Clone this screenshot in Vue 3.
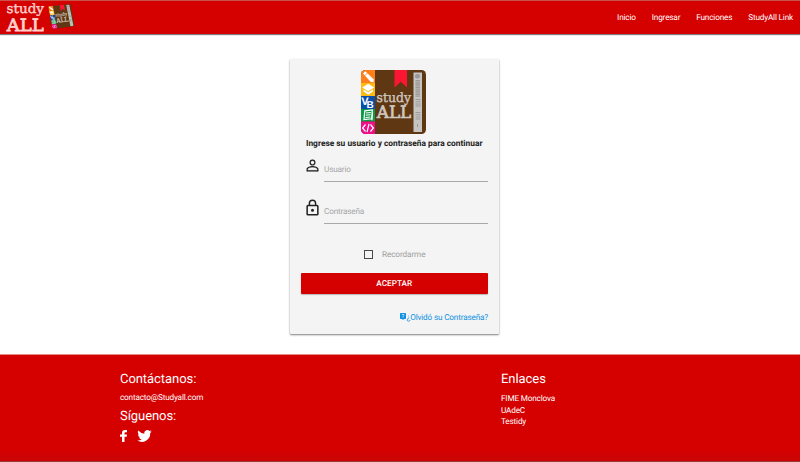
<script setup>
const navLinks = ['Inicio', 'Ingresar', 'Funciones', 'StudyAll Link']
const siteLinks = ['FIME Monclova', 'UAdeC', 'Testidy']
</script>

<template>
  <div class="page">
    <svg class="defs" width="0" height="0" aria-hidden="true">
      <defs>
        <clipPath id="cover"><rect width="65" height="64" rx="4.5" /></clipPath>
        <symbol id="book" viewBox="0 0 65 64">
          <g clip-path="url(#cover)">
            <rect width="65" height="64" fill="#5f3813" />
            <rect width="14" height="13" fill="#ff7f1a" />
            <rect y="13" width="14" height="13" fill="#fdbb12" />
            <rect y="26" width="14" height="13" fill="#0b4ea8" />
            <rect y="39" width="14" height="12.5" fill="#0d9a48" />
            <rect y="51.5" width="14" height="13" fill="#ec1188" />
            <path d="M2 3.500L4.300 1.200 12.500 9.200l.3 3-3-.3z" fill="#fff" />
            <path d="M4 5.500L6.300 3.200" stroke="#ff7f1a" stroke-width=".8" />
            <path d="M7.200 13.800l6 3.700-6 3.700-6-3.700z" fill="#fff" />
            <path d="M2.500 19.500l4.700 2.800 4.800-2.800v2l-4.800 3.200-4.700-3.200z" fill="#fff" />
            <g fill="#fff" font-family="Liberation Sans, sans-serif" font-weight="700">
              <text x=".2" y="34.600" font-size="11">V</text>
              <text x="5.600" y="38.300" font-size="10">B</text>
            </g>
            <path d="M3.800 40.800l7.500-.8-.7 8.800-7.600.8zM11.500 42.500l-.5 7.800" fill="none" stroke="#fff" stroke-width="1.200" />
            <path d="M5 43l4.800-.5M4.800 45.200l4.800-.5M4.500 47.500l4.800-.5" stroke="#fff" stroke-width="1" />
            <path d="M4.500 54.500L1.600 58l2.900 3.500M9.500 54.500l2.900 3.500-2.900 3.500M8 53.800l-2 8.400" fill="none" stroke="#fff" stroke-width="1.200" />
            <path d="M33.500 0H46v17.500l-6.200-5.800-6.300 5.800z" fill="#fb1634" />
            <rect x="52.500" y="2.500" width="8.500" height="59.500" fill="#c6c4c2" />
            <rect x="54" y="4" width="5" height="4.500" rx="2" fill="#999" />
            <path d="M56.700 10v17" stroke="#9b9997" stroke-width="4.500" stroke-dasharray="1 .4" />
            <path d="M57 29v8M57 42v8" stroke="#999" stroke-width="5" stroke-dasharray="1 1.200" />
            <path d="M56.500 54v3" stroke="#999" />
            <g fill="#cfc7c0" stroke="#cfc7c0" font-family="DejaVu Serif, serif">
              <text x="15.500" y="31.500" font-size="13" stroke-width=".35" textLength="34.500" lengthAdjust="spacingAndGlyphs">study</text>
              <text x="15.800" y="48" font-size="17" stroke-width=".7" textLength="34.500" lengthAdjust="spacingAndGlyphs">ALL</text>
            </g>
          </g>
        </symbol>
      </defs>
    </svg>

    <header class="bar">
      <svg class="brand" width="80" height="33" viewBox="0 0 80 33">
        <g fill="#ffd0cc" stroke="#ffd0cc" font-family="DejaVu Serif, serif">
          <text x="6.500" y="11.700" font-size="13" stroke-width=".4" textLength="37.500" lengthAdjust="spacingAndGlyphs">study</text>
          <text x="6.800" y="29.800" font-size="17" stroke-width=".8" textLength="37" lengthAdjust="spacingAndGlyphs">ALL</text>
        </g>
        <g transform="matrix(.345 -.04 .07 .355 48 5.300)">
          <use href="#book" width="65" height="64" />
        </g>
      </svg>
      <nav class="nav">
        <a v-for="link in navLinks" :key="link">{{ link }}</a>
      </nav>
    </header>

    <main class="main">
      <form class="card" @submit.prevent>
        <svg class="logo" width="65" height="64"><use href="#book" width="65" height="64" /></svg>
        <p class="title">Ingrese su usuario y contraseña para continuar</p>
        <div class="field">
          <svg width="13" height="15" viewBox="1 0 22 24" fill="#222" stroke="#222" stroke-width=".2">
            <path d="M12 3.900a3.100 3.100 0 1 1 0 6.200 3.100 3.100 0 0 1 0-6.200M12 15c3.900 0 8 1.700 8 3.200V20H4v-1.800C4 16.700 8.100 15 12 15m0-13a5 5 0 1 0 0 10 5 5 0 0 0 0-10zm0 11c-3.300 0-10 1.700-10 5v4h20v-4c0-3.300-6.700-5-10-5z" fill-rule="evenodd" />
          </svg>
          <span class="input">Usuario</span>
        </div>
        <div class="field">
          <svg width="13" height="17" viewBox="3.500 .5 17 22" fill="#222">
            <path d="M12 17a2 2 0 1 0 0-4 2 2 0 0 0 0 4zm6-9h-1V6A5 5 0 0 0 7 6v2H6a2 2 0 0 0-2 2v10a2 2 0 0 0 2 2h12a2 2 0 0 0 2-2V10a2 2 0 0 0-2-2zM8.900 6a3.100 3.100 0 0 1 6.200 0v2H8.900V6zM18 20H6V10h12v10z" fill-rule="evenodd" />
          </svg>
          <span class="input">Contraseña</span>
        </div>
        <label class="remember"><span class="box"></span><span class="remember-text">Recordarme</span></label>
        <button class="submit">ACEPTAR</button>
        <a class="forgot">
          <svg width="6" height="7" viewBox="0 0 6 7">
            <path d="M.7 0h4.600q.7 0 .7.700v4.600q0 .7-.7.700H4L3 7 2 6H.7Q0 6 0 5.300V.7Q0 0 .7 0z" fill="#0d91e3" />
            <path d="M2 2.200q0-1 1-1t1 1q0 .5-.5.800T3 3.900M3 4.500v.7" fill="none" stroke="#fff" stroke-width=".7" />
          </svg>¿Olvidó su Contraseña?
        </a>
      </form>
    </main>

    <footer class="footer">
      <section class="contact">
        <h5>Contáctanos:</h5>
        <p>contacto@Studyall.com</p>
        <h5 class="follow">Síguenos:</h5>
        <div class="social">
          <svg width="7" height="12" viewBox="0 0 7 12"><path d="M2 12V6.700H0V4.500h2V3Q2 0 4.900 0H7v2.200H5.600q-1.100 0-1.100 1v1.300H7l-.3 2.200H4.500V12z" fill="#fff" /></svg>
          <svg width="15" height="12" viewBox="0 0 24 20"><path d="M24 2.400a10 10 0 0 1-2.800.8A5 5 0 0 0 23.300.5a10 10 0 0 1-3.100 1.200 4.900 4.900 0 0 0-8.400 4.500A14 14 0 0 1 1.700 1a4.900 4.900 0 0 0 1.500 6.600A5 5 0 0 1 1 7a4.900 4.900 0 0 0 3.900 4.900 5 5 0 0 1-2.200.1 4.900 4.900 0 0 0 4.600 3.400A9.900 9.900 0 0 1 0 17.500 14 14 0 0 0 21.500 5 10 10 0 0 0 24 2.400z" fill="#fff" /></svg>
        </div>
      </section>
      <section class="links">
        <h5>Enlaces</h5>
        <a v-for="link in siteLinks" :key="link">{{ link }}</a>
      </section>
    </footer>
  </div>
</template>

<style>
body { background: #fff; }
</style>

<style scoped>
.page { height: 462px; display: flex; flex-direction: column; overflow: hidden; font-family: Roboto, sans-serif; font-size: 8.200px; letter-spacing: -.17px; text-rendering: geometricPrecision; color: #222; }
.page * { box-sizing: border-box; }
.page svg { letter-spacing: 0; }
.defs { display: block; flex: none; }
.bar { height: 34px; flex: none; display: flex; justify-content: space-between; background: #d50000; border-top: 1px solid #c9534b; box-shadow: 0 1px 1px rgba(0, 0, 0, .5); }
.brand { display: block; }
.nav { display: flex; gap: 16px; padding-right: 7px; line-height: 34px; color: #fff; }
.main { height: 320px; flex: none; padding-top: 25px; display: flex; justify-content: center; align-items: flex-start; }
.card { width: 209px; height: 275px; margin-right: 11px; padding: 11px 11px 0 10.500px; display: flex; flex-direction: column; background: #f4f4f4; border-radius: 1px; box-shadow: 0 1px 2px rgba(0, 0, 0, .5); }
.logo { align-self: center; flex: none; margin-right: 1.500px; }
.title { margin: 5px 0 0; line-height: 11px; font-size: 8.400px; letter-spacing: 0; font-weight: 700; text-align: center; white-space: nowrap; }
.field { height: 42px; flex: none; display: flex; justify-content: space-between; padding-left: 5.500px; }
.title + .field { height: 32px; }
.title + .field svg { margin-top: 8px; }
.field svg { margin-top: 17px; }
.input { width: 164px; border-bottom: 1px solid #a9a9a9; color: #a5a5a5; display: flex; align-items: flex-end; padding-bottom: 5px; line-height: 11px; }
.remember { display: flex; align-items: center; gap: 9px; height: 12px; margin: 24px 0 0 63.500px; color: #9e9e9e; letter-spacing: -.1px; }
.remember-text { padding-top: 2px; }
.box { width: 9px; height: 9px; border: 1px solid #4a4a4a; }
.submit { height: 21px; flex: none; margin-top: 13px; padding: 1px 0 0; border: 0; border-radius: 1px; background: #d50000; color: #fff; font: 500 8.200px/20px Roboto, sans-serif; letter-spacing: 0; text-rendering: geometricPrecision; box-shadow: 0 1px 1px rgba(0, 0, 0, .25); }
.forgot { display: flex; justify-content: flex-end; align-items: flex-start; gap: 1px; margin-top: 18px; line-height: 13px; color: #0d91e3; }
.forgot svg { margin-top: 1px; }
.footer { height: 108px; flex: none; display: grid; grid-template-columns: 381px 1fr; padding: 17px 0 0 120px; color: #fff; background: linear-gradient(#d50000 0 94px, #c90606 107px); border-top: 1px solid #e78b84; border-bottom: 1px solid #9b3a35; }
h5 { margin: 0; font-size: 13px; line-height: 15px; font-weight: 400; letter-spacing: -.06px; }
.contact p { margin: 6px 0 0; line-height: 11px; }
.follow { margin-top: 5px; }
.social { display: flex; gap: 10px; margin-top: 6px; }
.links { display: flex; flex-direction: column; line-height: 11.500px; }
.links h5 { margin-bottom: 7px; }
</style>
